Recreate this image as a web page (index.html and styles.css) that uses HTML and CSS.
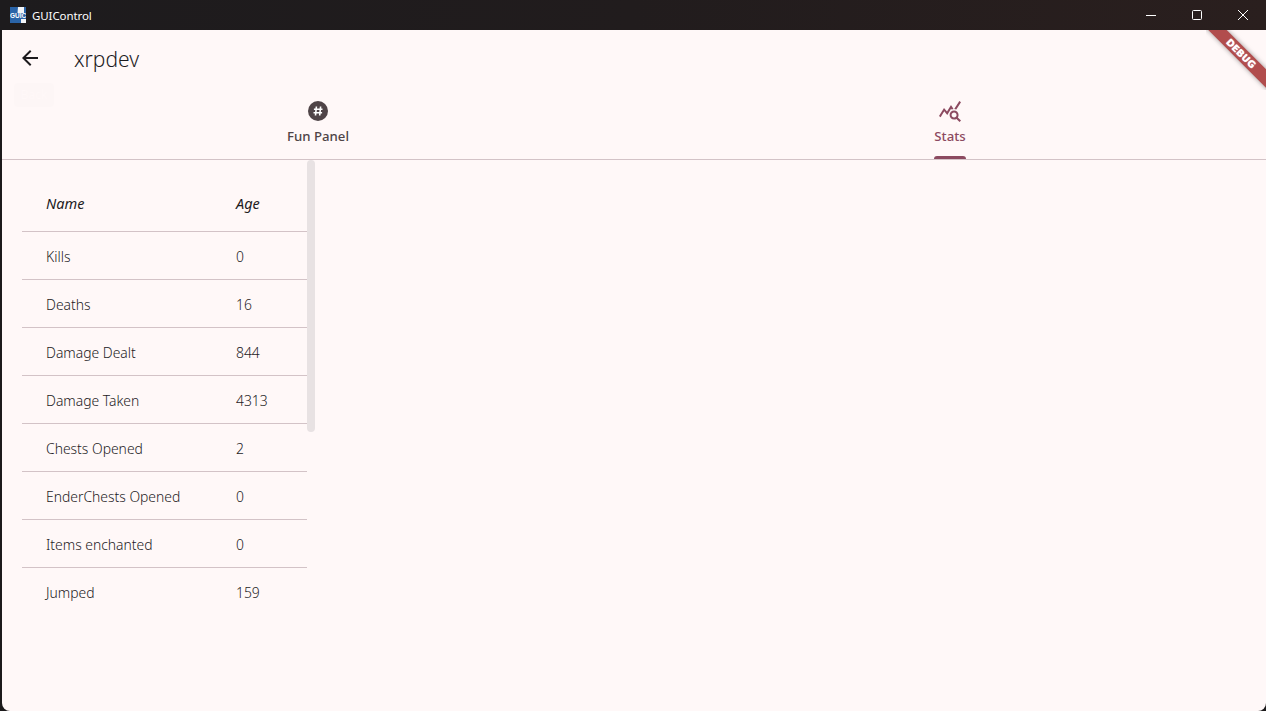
FILE: index.html
```html
<!DOCTYPE html>
<html lang="en">

<head>
    <meta charset="UTF-8">
    <title>GUIControl</title>
    <link rel="stylesheet" href="styles.css">
</head>

<body>
    <div class="window">
        <div class="titlebar">
            <svg class="titlebar__logo" width="16" height="16" viewBox="0 0 16 16">
                <rect width="16" height="16" fill="#2a64a8"/>
                <path d="M8 0h6v6H7.5zM11 12h5v4h-5z" fill="#f2f5f9"/>
                <text x="8" y="10.5" text-anchor="middle" class="titlebar__logo-text">GUIC</text>
            </svg>
            <span class="titlebar__title">GUIControl</span>
            <div class="titlebar__buttons">
                <span class="window-button">
                    <svg width="12" height="12" viewBox="0 0 12 12"><path d="M1 6.5h10" stroke="#fff" stroke-width="1" fill="none"/></svg>
                </span>
                <span class="window-button">
                    <svg width="12" height="12" viewBox="0 0 12 12"><rect x="1.5" y="1.5" width="9" height="9" rx="1" stroke="#fff" stroke-width="1" fill="none"/></svg>
                </span>
                <span class="window-button">
                    <svg width="12" height="12" viewBox="0 0 12 12"><path d="M1 1l10 10M11 1L1 11" stroke="#fff" stroke-width="1" fill="none"/></svg>
                </span>
            </div>
        </div>

        <div class="app">
            <div class="appbar">
                <svg class="appbar__back" width="24" height="24" viewBox="0 0 24 24"><path d="M20 11H7.83l5.59-5.59L12 4l-8 8 8 8 1.41-1.41L7.83 13H20v-2z" fill="#1d1b1e"/></svg>
                <span class="appbar__title">xrpdev</span>
            </div>
            <div class="back-tooltip">Back</div>

            <div class="tabs">
                <div class="tab">
                    <svg width="24" height="24" viewBox="0 0 24 24">
                        <circle cx="12" cy="12" r="10" fill="#4f4447"/>
                        <path d="M10.4 7.5l-.9 9M14.6 7.5l-.9 9M7.9 10.2h8.6M7.5 13.8h8.6" stroke="#fff" stroke-width="1.6" fill="none"/>
                    </svg>
                    <span class="tab__label">Fun Panel</span>
                </div>
                <div class="tab tab--active">
                    <svg width="24" height="24" viewBox="0 0 24 24">
                        <path d="M19.88,18.47c0.44-0.7,0.7-1.51,0.7-2.39c0-2.49-2.01-4.5-4.5-4.5s-4.5,2.01-4.5,4.5s2.01,4.5,4.49,4.5c0.88,0,1.7-0.26,2.39-0.7L21.58,23L23,21.58L19.88,18.47z M16.08,18.58c-1.38,0-2.5-1.12-2.5-2.5c0-1.38,1.12-2.5,2.5-2.5s2.5,1.12,2.5,2.5C18.58,17.46,17.46,18.58,16.08,18.58z M15.72,10.08c-0.74,0.02-1.45,0.18-2.1,0.45l-0.55-0.83l-3.8,6.18l-3.01-3.52l-3.63,5.81L1,17l5-8l3,3.5L13,6C13,6,15.72,10.08,15.72,10.08z M18.31,10.58c-0.64-0.28-1.33-0.45-2.05-0.49c0,0,5.12-8.09,5.12-8.09L23,3.18L18.31,10.58z" fill="#8c4a60"/>
                    </svg>
                    <span class="tab__label">Stats</span>
                    <span class="tab__indicator"></span>
                </div>
            </div>

            <div class="content">
                <div class="stats-table">
                    <div class="stats-row stats-row--head">
                        <span class="stats-row__name">Name</span>
                        <span>Age</span>
                    </div>
                    <div class="stats-row">
                        <span class="stats-row__name">Kills</span>
                        <span>0</span>
                    </div>
                    <div class="stats-row">
                        <span class="stats-row__name">Deaths</span>
                        <span>16</span>
                    </div>
                    <div class="stats-row">
                        <span class="stats-row__name">Damage Dealt</span>
                        <span>844</span>
                    </div>
                    <div class="stats-row">
                        <span class="stats-row__name">Damage Taken</span>
                        <span>4313</span>
                    </div>
                    <div class="stats-row">
                        <span class="stats-row__name">Chests Opened</span>
                        <span>2</span>
                    </div>
                    <div class="stats-row">
                        <span class="stats-row__name">EnderChests Opened</span>
                        <span>0</span>
                    </div>
                    <div class="stats-row">
                        <span class="stats-row__name">Items enchanted</span>
                        <span>0</span>
                    </div>
                    <div class="stats-row">
                        <span class="stats-row__name">Jumped</span>
                        <span>159</span>
                    </div>
                </div>
                <div class="scrollbar"></div>
            </div>

            <div class="debug-banner"><span>DEBUG</span></div>
        </div>
    </div>
</body>

</html>
```

FILE: styles.css
```css
* {
    box-sizing: border-box;
}

html,
body {
    margin: 0;
    height: 100%;
    overflow: hidden;
    background: #1c1a1b;
}

body {
    font-family: "Noto Sans", "Open Sans", sans-serif;
    color: #1d1b1e;
}

.window {
    height: 711px;
    display: flex;
    flex-direction: column;
}

.titlebar {
    height: 30px;
    flex: none;
    display: flex;
    align-items: center;
    padding-left: 10px;
    background: linear-gradient(90deg, #1d1b1d 0%, #211c1d 50%, #2a1f1e 100%);
}

.titlebar__logo {
    flex: none;
}

.titlebar__logo-text {
    font-family: "Liberation Sans", sans-serif;
    font-size: 6.5px;
    font-weight: 700;
    fill: #fff;
}

.titlebar__title {
    margin-left: 6px;
    font-size: 11.5px;
    color: #fff;
    letter-spacing: -0.1px;
}

.titlebar__buttons {
    margin-left: auto;
    display: flex;
    height: 100%;
}

.window-button {
    width: 46px;
    display: flex;
    align-items: center;
    justify-content: center;
}

.app {
    flex: 1;
    position: relative;
    margin-left: 2px;
    background: #fff8f8;
    border-bottom-left-radius: 8px;
    border-bottom-right-radius: 8px;
    overflow: hidden;
    display: flex;
    flex-direction: column;
}

.appbar {
    height: 56px;
    flex: none;
    display: flex;
    align-items: center;
    padding-left: 16px;
}

.appbar__title {
    margin-left: 32px;
    padding-top: 2px;
    font-size: 21px;
    line-height: 28px;
    font-weight: 300;
}

.back-tooltip {
    position: absolute;
    left: 12px;
    top: 53px;
    width: 40px;
    height: 24px;
    border-radius: 4px;
    background: #fdf6f6;
    color: #fff8f8;
    font-size: 12px;
    line-height: 24px;
    text-align: center;
}

.tabs {
    height: 74px;
    flex: none;
    display: grid;
    grid-template-columns: 1fr 1fr;
    border-bottom: 1px solid #d3c3c7;
}

.tab {
    position: relative;
    display: flex;
    flex-direction: column;
    align-items: center;
    padding-top: 13px;
    color: #4f4447;
}

.tab--active {
    color: #8c4a60;
}

.tab__label {
    margin-top: 3px;
    font-size: 13.2px;
    line-height: 20px;
    font-weight: 500;
}

.tab__indicator {
    position: absolute;
    bottom: 0;
    left: 50%;
    width: 32px;
    height: 3px;
    margin-left: -16px;
    background: #8c4a60;
    border-radius: 3px 3px 0 0;
}

.content {
    flex: 1;
    position: relative;
    min-height: 0;
    overflow: hidden;
    padding-left: 20px;
}

.stats-table {
    width: 285px;
}

.stats-row {
    display: flex;
    align-items: center;
    height: 48px;
    padding-top: 1px;
    padding-left: 24px;
    border-bottom: 1px solid #d3c3c7;
    font-size: 13.9px;
    font-weight: 350;
}

.stats-row:last-child {
    border-bottom: none;
}

.stats-row--head {
    height: 72px;
    padding-top: 15px;
    font-size: 14.5px;
    font-style: italic;
    font-weight: 400;
}

.stats-row__name {
    width: 190px;
}

.scrollbar {
    position: absolute;
    left: 305px;
    top: 0;
    width: 8px;
    height: 272px;
    border-radius: 4px;
    background: #e8e2e3;
}

.debug-banner {
    position: absolute;
    top: 0;
    right: 0;
    width: 60px;
    height: 60px;
    overflow: hidden;
}

.debug-banner span {
    position: absolute;
    top: 17px;
    left: -15px;
    width: 100px;
    height: 13px;
    transform: rotate(45deg);
    background: #b14d4d;
    box-shadow: 0 0 5px rgba(0, 0, 0, 0.4);
    color: #fff;
    font-family: "DejaVu Sans", sans-serif;
    font-size: 9.5px;
    font-weight: 700;
    line-height: 13px;
    text-align: center;
    text-shadow: 0 0 1px #fff;
}
```
